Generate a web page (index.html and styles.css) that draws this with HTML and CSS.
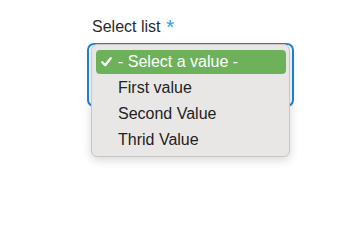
FILE: index.html
```html
<!DOCTYPE html>
<html lang="en">
<head>
<meta charset="utf-8">
<title>Select list</title>
<link rel="stylesheet" href="styles.css">
</head>
<body>
<div class="form-item">
  <label class="label">Select list <span class="req">*</span></label>
  <div class="field-wrap">
    <div class="field"></div>
    <ul class="menu">
      <li class="opt selected"><svg class="check" width="11" height="10" viewBox="0 0 11 10"><path d="M1.3 5.3 L4.2 8.2 L9.7 1.3" fill="none" stroke="#fff" stroke-width="2.3" stroke-linecap="round" stroke-linejoin="round"/></svg>- Select a value -</li>
      <li class="opt">First value</li>
      <li class="opt">Second Value</li>
      <li class="opt">Thrid Value</li>
    </ul>
  </div>
</div>
</body>
</html>
```
FILE: styles.css
```css
html, body {
  margin: 0;
  padding: 0;
  background: #fff;
}
body {
  width: 362px;
  height: 228px;
  font-family: "Liberation Sans", Arial, sans-serif;
  font-size: 16px;
  color: #222;
}
.form-item {
  display: flex;
  flex-direction: column;
  padding: 17px 0 0 87px;
}
.label {
  display: block;
  line-height: 20px;
  height: 20px;
  padding-left: 5px;
  color: #2a2a2a;
}
.req {
  color: #3a9de4;
  font-size: 21px;
  line-height: 20px;
  vertical-align: top;
  margin-left: 1px;
}
.field-wrap {
  position: relative;
  margin-top: 6px;
}
.field {
  width: 203px;
  height: 60px;
  border: 2px solid #1b86d8;
  border-radius: 7px;
  background: #fff;
}
.menu {
  position: absolute;
  left: 4px;
  top: 1px;
  width: 190px;
  margin: 0;
  padding: 5px 3px 4px 4px;
  list-style: none;
  background: #e9e7e5;
  border: 1px solid #c9c7c5;
  border-radius: 6px;
  box-shadow: 0 3px 10px rgba(0, 0, 0, 0.16);
  display: flex;
  flex-direction: column;
  gap: 2px;
}
.opt {
  display: flex;
  align-items: center;
  height: 24px;
  line-height: 24px;
  padding-left: 22px;
  border-radius: 4px;
  color: #222;
  white-space: nowrap;
}
.opt.selected {
  background: #6db25b;
  color: #fff;
  padding-left: 5px;
}
.check {
  flex: none;
  margin-right: 6px;
}
```
